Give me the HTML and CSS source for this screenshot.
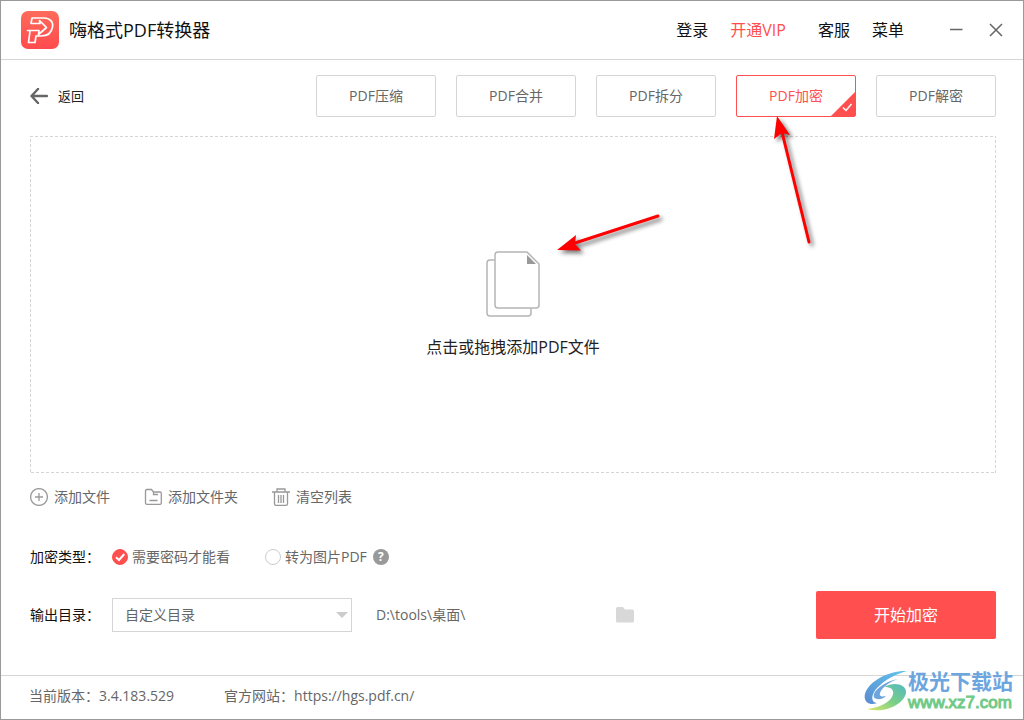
FILE: index.html
```html
<!DOCTYPE html>
<html lang="zh-CN">
<head>
<meta charset="utf-8">
<meta name="viewport" content="width=device-width, initial-scale=1">
<title>嗨格式PDF转换器</title>
<link rel="stylesheet" href="styles.css">
</head>
<body>
<div class="window">
  <header class="titlebar">
    <svg class="logo" viewBox="0 0 38 38" aria-hidden="true">
      <defs><linearGradient id="logo-fill" x1="0" y1="0" x2="0" y2="1"><stop offset="0" stop-color="#ff6b5c"/><stop offset="1" stop-color="#ff4b4d"/></linearGradient></defs>
      <rect width="38" height="38" rx="7" fill="url(#logo-fill)"/>
      <path d="M10 12.500H19L18.500 9.500L25.500 16.500L17.500 23.500L18 19.500H6.500M10 12.500L11 7H23C29 7 32.500 11 31.500 16C30.500 22 26 25 20 25H15L14 31.500H7.500L9 20" fill="none" stroke="#fff" stroke-width="1.700" stroke-linejoin="round" stroke-linecap="round"/>
    </svg>
    <h1 class="title">嗨格式PDF转换器</h1>
    <nav class="menu">
      <a href="#">登录</a>
      <a href="#" class="vip">开通VIP</a>
      <a href="#">客服</a>
      <a href="#">菜单</a>
    </nav>
    <div class="controls">
      <button type="button" aria-label="最小化"><svg viewBox="0 0 14 14"><path d="M1 6.500H13.500"/></svg></button>
      <button type="button" aria-label="关闭"><svg viewBox="0 0 14 14"><path d="M1 1L13 13M13 1L1 13"/></svg></button>
    </div>
  </header>

  <main class="content">
    <div class="toolbar">
      <button type="button" class="back">
        <svg viewBox="0 0 18 16" aria-hidden="true"><path d="M8 1L1.500 8L8 15M2 8H17"/></svg>返回
      </button>
      <div class="tabs">
        <button type="button" class="tab">PDF压缩</button>
        <button type="button" class="tab">PDF合并</button>
        <button type="button" class="tab">PDF拆分</button>
        <button type="button" class="tab active">PDF加密
          <svg class="corner" viewBox="0 0 24 24" aria-hidden="true"><path d="M24 0V24H0Z" fill="#ff4f4f"/><path d="M12 15.500L15 18.500L20.500 12" fill="none" stroke="#fff" stroke-width="1.500"/></svg>
        </button>
        <button type="button" class="tab">PDF解密</button>
      </div>
    </div>

    <button type="button" class="dropzone">
      <svg class="border" aria-hidden="true"><rect width="100%" height="100%"/></svg>
      <svg class="files" viewBox="0 0 54 66" aria-hidden="true">
        <path d="M8.500 9H4Q1 9 1 12V62Q1 65 4 65H42Q45 65 45 62V57.500"/>
        <path d="M12 1H41L53 13V54Q53 57 50 57H12Q9 57 9 54V4Q9 1 12 1Z"/>
        <path class="fold" d="M41 4V13H50Z"/>
      </svg>
      <span>点击或拖拽添加PDF文件</span>
    </button>

    <div class="actions">
      <button type="button"><svg viewBox="0 0 18 18" aria-hidden="true"><circle cx="9" cy="9" r="8.400"/><path d="M9 5V13M5 9H13"/></svg>添加文件</button>
      <button type="button"><svg viewBox="0 0 18 18" aria-hidden="true"><path d="M1.500 3Q1.500 1.500 3 1.500H7.500L9.500 4H16Q17.300 4 17.300 5.300V15Q17.300 16.300 16 16.300H3Q1.500 16.300 1.500 15ZM9.500 4V6.500H14M5.500 12.500H13.500"/></svg>添加文件夹</button>
      <button type="button"><svg viewBox="0 0 18 18" aria-hidden="true"><path d="M0 4H18M5 4V1H13V4M2.500 4V16Q2.500 17.300 4 17.300H14Q15.500 17.300 15.500 16V4M6.500 7V15M9 7V15M11.500 7V15"/></svg>清空列表</button>
    </div>

    <fieldset class="row types">
      <legend class="hidden"></legend>
      <span class="label">加密类型：</span>
      <label class="choice"><input type="radio" name="type" checked>
        <svg viewBox="0 0 16 16" aria-hidden="true"><circle class="disc" cx="8" cy="8" r="7.500"/><path class="tick" d="M4 8.300L7 11L12.300 5"/></svg>需要密码才能看</label>
      <label class="choice"><input type="radio" name="type">
        <svg viewBox="0 0 16 16" aria-hidden="true"><circle class="disc" cx="8" cy="8" r="7.500"/><path class="tick" d="M4 8.300L7 11L12.300 5"/></svg>转为图片PDF</label>
      <button type="button" class="help" aria-label="帮助">?</button>
    </fieldset>

    <div class="row output">
      <label class="label" for="target">输出目录：</label>
      <div class="select">
        <select id="target"><option>自定义目录</option></select>
        <svg viewBox="0 0 12 6" aria-hidden="true"><path d="M0 0H12L6 6Z"/></svg>
      </div>
      <span class="path">D:\tools\桌面\</span>
      <button type="button" class="browse" aria-label="选择文件夹"><svg viewBox="0 0 18 16"><path d="M0 1.500Q0 0 1.500 0H7L9 2.500H16.500Q18 2.500 18 4V14Q18 15.500 16.500 15.500H1.500Q0 15.500 0 14Z"/></svg></button>
      <button type="button" class="start">开始加密</button>
    </div>
  </main>

  <footer class="footer">
    <span>当前版本：3.4.183.529</span>
    <span>官方网站：<a href="#">https://hgs.pdf.cn/</a></span>
  </footer>

  <div class="watermark">
    <svg viewBox="0 0 44 42" aria-hidden="true">
      <defs>
        <linearGradient id="swirl-blue" x1="0" y1="1" x2="1" y2="0"><stop offset="0" stop-color="#5b8bd0"/><stop offset="1" stop-color="#62c6ee"/></linearGradient>
        <linearGradient id="swirl-green" x1="0" y1="1" x2="1" y2="0"><stop offset="0" stop-color="#dce867"/><stop offset=".5" stop-color="#78cf87"/><stop offset="1" stop-color="#54b7c4"/></linearGradient>
      </defs>
      <path d="M43 1C27 0 5 10 1 24C-1 32 6 36 13 33C6 32 7 24 14 17C22 9 32 4 43 1Z" fill="url(#swirl-blue)"/>
      <path d="M34 9C23 11 12 18 10 24C8 30 17 31 22 26C17 27 15 26 16 23C18 17 27 11 34 9Z" fill="#6da5df"/>
      <path d="M20 17C30 11 43 14 42 23C40 34 21 44 3 39C16 38 28 31 29 24C30 19 26 17 20 17Z" fill="url(#swirl-green)"/>
    </svg>
    <div class="mark-text"><strong>极光下载站</strong><span>www.xz7.com</span></div>
  </div>

  <svg class="pointer-file" viewBox="0 0 110 50" aria-hidden="true"><path class="shaft" d="M103 10L20 37"/><path class="head" d="M2 44L21 29L20 38L26 44.500Z"/></svg>
  <svg class="pointer-tab" viewBox="0 0 50 135" aria-hidden="true"><path class="shaft" d="M39 128L12 18"/><path class="head" d="M7 2L20 21L12 19L4 25Z"/></svg>
</div>
</body>
</html>
```

FILE: styles.css
```css
* { box-sizing: border-box; }

body {
  margin: 0;
  font: 14px/20px "Open Sans", "Noto Sans CJK SC", sans-serif;
  color: #666;
  background: #fff;
}

button {
  font: inherit;
  color: inherit;
  background: none;
  border: 0;
  padding: 0;
  cursor: pointer;
}

a { color: inherit; text-decoration: none; }

svg { flex: none; display: block; }

.window {
  position: relative;
  display: flex;
  flex-direction: column;
  min-height: 100vh;
  border: 1px solid #999;
}

.titlebar {
  display: flex;
  align-items: center;
  height: 59px;
  padding: 0 20px;
  border-bottom: 1px solid #d5d5d5;
  color: #111;
}

.logo { width: 38px; height: 38px; }

.title {
  margin: 0 auto 0 10px;
  font-size: 18px;
  line-height: 24px;
  font-weight: 400;
}

.menu { display: flex; gap: 22px; font-size: 16px; }
.vip { color: #ff4f4f; margin-right: 10px; }

.controls { display: flex; gap: 26px; margin-left: 45px; }
.controls svg { width: 14px; height: 14px; fill: none; stroke: #666; stroke-width: 1.500; }

.content {
  flex: 1;
  display: flex;
  flex-direction: column;
  padding: 15px 27px 36px 29px;
}

.toolbar { display: flex; justify-content: space-between; align-items: center; }

.back { display: flex; align-items: center; gap: 10px; color: #222; font-size: 13px; }
.back svg { width: 18px; height: 16px; fill: none; stroke: #666; stroke-width: 2.400; stroke-linecap: round; stroke-linejoin: round; }

.tabs { display: flex; gap: 20px; }

.tab {
  position: relative;
  width: 120px;
  height: 42px;
  border: 1px solid #d5d5d5;
  border-radius: 2px;
}
.tab.active { border-color: #ff4f4f; color: #ff4f4f; }
.corner { position: absolute; right: 0; bottom: 0; width: 24px; height: 24px; }

.dropzone {
  position: relative;
  flex: 1;
  display: flex;
  flex-direction: column;
  align-items: center;
  justify-content: center;
  gap: 20px;
  margin-top: 19px;
  padding-bottom: 2px;
  color: #222;
  font-size: 16px;
}
.border { position: absolute; inset: 0; width: 100%; height: 100%; }
.border rect { fill: none; stroke: #d5d5d5; stroke-width: 2; stroke-dasharray: 3 2; }
.files { width: 54px; height: 66px; fill: #fff; stroke: #b5b5b5; stroke-width: 1.500; }
.files .fold { fill: #999; stroke: none; }

.actions { display: flex; gap: 34px; margin-top: 14px; }
.actions button { display: flex; align-items: center; gap: 6px; }
.actions svg { width: 18px; height: 18px; fill: none; stroke: #999; stroke-width: 1.300; }

.row { display: flex; align-items: center; margin: 0; padding: 0; border: 0; }
.label { width: 82px; color: #111; }
.hidden { display: none; }

.types { margin-top: 40px; }
.choice { display: flex; align-items: center; gap: 4px; }
.choice + .choice { margin-left: 35px; }
.choice input { position: absolute; opacity: 0; }
.choice svg { width: 16px; height: 16px; }
.disc { fill: #fff; stroke: #ccc; }
.tick { fill: none; stroke: none; stroke-width: 2; }
input:checked + svg .disc { fill: #ff4f4f; stroke: #ff4f4f; }
input:checked + svg .tick { stroke: #fff; }

.help {
  width: 16px;
  height: 16px;
  margin-left: 6px;
  border-radius: 50%;
  background: #999;
  color: #fff;
  font-size: 12px;
  line-height: 16px;
  font-weight: 700;
}

.output { margin-top: 24px; }
.select { position: relative; width: 240px; }
.select select {
  display: block;
  appearance: none;
  width: 100%;
  height: 34px;
  padding: 0 12px;
  border: 1px solid #d5d5d5;
  border-radius: 0;
  background: #fff;
  color: inherit;
  font: inherit;
}
.select svg { position: absolute; right: 4px; top: 14px; width: 12px; height: 6px; fill: #ccc; pointer-events: none; }
.path { width: 240px; margin-left: 24px; }
.browse svg { width: 18px; height: 16px; fill: #d8d8d8; }

.start {
  width: 180px;
  height: 48px;
  margin-left: auto;
  border-radius: 2px;
  background: #ff4f4f;
  color: #fff;
  font-size: 16px;
}

.footer {
  display: flex;
  align-items: center;
  gap: 50px;
  height: 44px;
  padding: 0 28px 4px;
  border-top: 1px solid #d5d5d5;
}

.watermark {
  position: absolute;
  right: 10px;
  bottom: 7px;
  display: flex;
  align-items: center;
}
.watermark svg { width: 44px; height: 42px; }
.mark-text { display: flex; flex-direction: column; font-family: "Liberation Sans", "Noto Sans CJK SC", sans-serif; }
.mark-text strong { color: #6da5df; font-size: 21px; line-height: 24px; }
.mark-text span { color: #70ca88; font-size: 17px; line-height: 18px; -webkit-text-stroke: 1px #70ca88; }

.pointer-file, .pointer-tab { position: absolute; pointer-events: none; filter: drop-shadow(3px 3px 2px #0008); }
.pointer-file { left: 554px; top: 205px; width: 110px; height: 50px; }
.pointer-tab { left: 769px; top: 113px; width: 50px; height: 135px; }
.shaft { fill: none; stroke: #f00; stroke-width: 3; stroke-linecap: round; }
.head { fill: #f00; }
```
